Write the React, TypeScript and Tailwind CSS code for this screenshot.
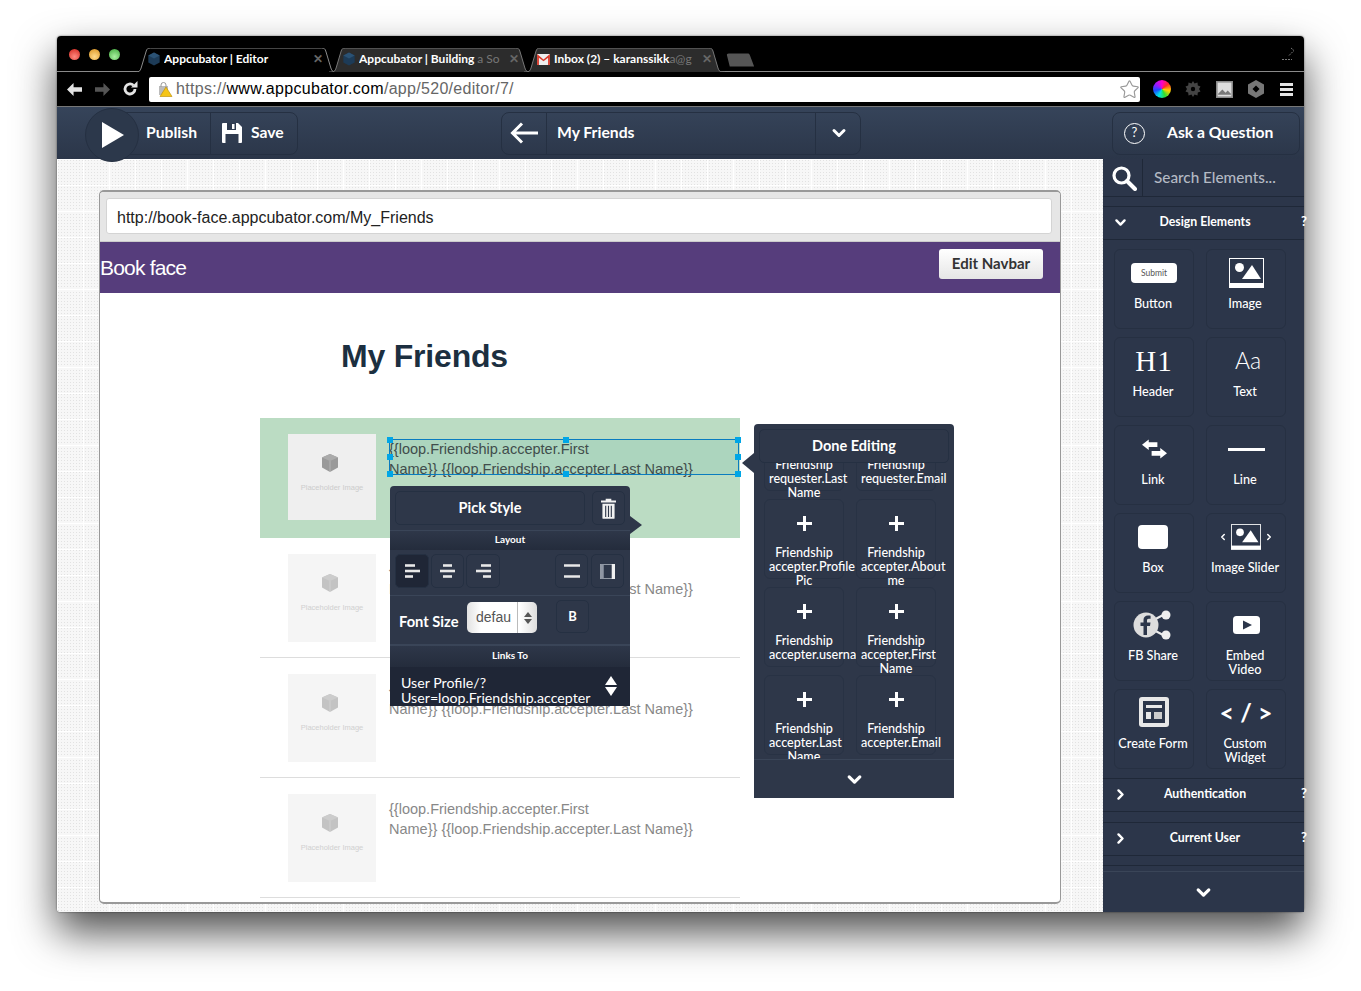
import { Star } from "lucide-react";

function Chevron({ dir = "down", className = "" }: { dir?: "down" | "right"; className?: string }) {
  return (
    <svg viewBox="0 0 16 16" className={className} fill="none" stroke="#fff" strokeWidth="3" strokeLinecap="round" strokeLinejoin="round">
      {dir === "down" ? <path d="M3 5.5l5 5 5-5" /> : <path d="M5.5 3l5 5-5 5" />}
    </svg>
  );
}

function Hex({ className = "" }: { className?: string }) {
  return (
    <svg viewBox="0 0 16 16" className={className}>
      <path d="M8 .5l6.5 3.5v8L8 15.5 1.5 12V4z" fill="#1d3b57" />
      <path d="M8 .5l6.5 3.5L8 7.5 1.5 4z" fill="#2b5274" />
    </svg>
  );
}

function TabShape({ fill, stroke, className = "" }: { fill: string; stroke: string; className?: string }) {
  return (
    <svg viewBox="0 0 200 24" preserveAspectRatio="none" className={className}>
      <path d="M0 24h2c3 0 4-1 5-4L12 3c.6-2 1.6-3 4-3h168c2.400 0 3.400 1 4 3l5 17c1 3 2 4 5 4h2" fill={fill} stroke={stroke} strokeWidth="1" vectorEffect="non-scaling-stroke" />
    </svg>
  );
}

function Tab({ title, fade, active, icon, width }: { title: string; fade?: string; active?: boolean; icon: React.ReactNode; width: string }) {
  return (
    <div className={`relative h-[24px] shrink-0 ${width}`}>
      <TabShape fill={active ? "#000" : "#2c2c2c"} stroke={active ? "#8a8a8a" : "#777"} className="absolute inset-0 w-full h-full" />
      <div className={`relative flex items-center h-full pl-[13px] pb-[2px] gap-[3px] text-[12px] font-bold text-white whitespace-nowrap ${active ? "pr-[15px]" : "pr-[13px]"}`}>
        <span className="w-[14px] h-[14px] shrink-0 flex items-center">{icon}</span>
        <span className="flex-1 overflow-hidden">
          {title}
          {fade && <span className="text-[#777] font-normal">{fade}</span>}
        </span>
        <span className="text-[#666] text-[12px] leading-none ml-1">✕</span>
      </div>
    </div>
  );
}

function ChromeBar() {
  return (
    <div className="h-[36px] bg-black flex items-end relative shrink-0 border-b border-[#8a8a8a] rounded-t-[4px]">
      <div className="flex items-center gap-[9px] absolute left-[12px] top-[13px]">
        <span className="w-[11px] h-[11px] rounded-full bg-[radial-gradient(circle_at_50%_70%,#ff8a80,#d3241c)]" />
        <span className="w-[11px] h-[11px] rounded-full bg-[radial-gradient(circle_at_50%_70%,#ffd98a,#d8901c)]" />
        <span className="w-[11px] h-[11px] rounded-full bg-[radial-gradient(circle_at_50%_70%,#a8f0a0,#3fa83a)]" />
      </div>
      <div className="flex ml-[77px] -mb-px relative">
        <Tab active title="Appcubator | Editor" width="w-[204px]" icon={<Hex className="w-[14px] h-[14px]" />} />
        <div className="-ml-[9px]">
          <Tab title="Appcubator | Building " fade="a So" width="w-[203px]" icon={<Hex className="w-[14px] h-[14px]" />} />
        </div>
        <div className="-ml-[8px]">
          <Tab
            title="Inbox (2) – karanssikk"
            fade="a@g"
            width="w-[201px]"
            icon={
              <svg viewBox="0 0 14 12" className="w-[13px] h-[11px]">
                <rect width="14" height="12" fill="#eee" />
                <path d="M0 0l7 6 7-6v12h-2V4L7 8 2 4v8H0z" fill="#d93a2b" />
              </svg>
            }
          />
        </div>
        <svg viewBox="0 0 32 14" className="w-[30px] h-[14px] ml-[1px] self-end mb-[5px]">
          <path d="M4 14L1 2c-.3-1 .3-2 2-2h20c1.500 0 2 .5 2.500 2L30 14z" fill="#555" />
        </svg>
      </div>
      <svg viewBox="0 0 16 16" className="absolute right-[8px] top-[9px] w-[16px] h-[16px]" stroke="#777" fill="none">
        <path d="M2 14.500h10M11 3l3 2.500-5 5" strokeDasharray="2 1" />
      </svg>
    </div>
  );
}

function AddressBar() {
  return (
    <div className="h-[35px] bg-black flex items-center shrink-0 border-b border-[#777]">
      <div className="w-[92px] flex items-center pl-[9px] shrink-0">
        <svg viewBox="0 0 18 16" className="w-[17px] h-[15px]">
          <path d="M8 1L1 8l7 7V10.500h9v-5H8z" fill="#e4e4e4" />
        </svg>
        <svg viewBox="0 0 18 16" className="w-[17px] h-[15px] ml-[11px]">
          <path d="M10 1l7 7-7 7V10.500H1v-5h9z" fill="#555" />
        </svg>
        <svg viewBox="0 0 16 16" className="w-[16px] h-[16px] ml-[11px]" fill="none">
          <path d="M13 8a5 5 0 1 1-1.600-3.700" stroke="#e4e4e4" strokeWidth="2.800" />
          <path d="M9 6.500h6.500V0z" fill="#e4e4e4" />
        </svg>
      </div>
      <div className="w-[991px] h-[25px] bg-white rounded-[2px] flex items-center pl-[8px] shrink-0">
        <svg viewBox="0 0 16 16" className="w-[16px] h-[16px] shrink-0">
          <rect x="2" y="5" width="9" height="9" fill="#bbb" />
          <path d="M4 6V4a2.500 2.500 0 0 1 5 0v2" stroke="#999" fill="none" />
          <path d="M9 6l6 9.500H3z" fill="#f5c518" stroke="#b88a00" strokeWidth=".6" />
        </svg>
        <span className="ml-[3px] text-[16px] text-[#666] [font-family:'Liberation_Sans',sans-serif] tracking-[0.3px] whitespace-nowrap">
          https://<span className="text-black">www.appcubator.com</span>/app/520/editor/7/
        </span>
        <Star className="ml-auto w-[21px] h-[21px] text-[#999]" strokeWidth={1.3} />
      </div>
      <div className="flex items-center flex-1 pl-[13px]">
        <span className="w-[18px] h-[18px] rounded-full bg-[conic-gradient(#ff00c8,#ff2a2a,#ffd400,#2fe02f,#00e5e5,#1a4dff,#9a18ff,#ff00c8)]" />
        <svg viewBox="0 0 16 16" className="w-[16px] h-[16px] ml-[14px]" fill="#444">
          <path d="M8 0l1.500 2.500L12.500 1.500 12.800 4.500 15.500 5.500 14 8l1.500 2.500-2.700 1-.3 3-3-1L8 16l-1.500-2.500-3 1-.3-3-2.700-1L2 8 .5 5.500l2.700-1 .3-3 3 1z" />
          <circle cx="8" cy="8" r="2.200" fill="#000" />
        </svg>
        <svg viewBox="0 0 16 16" className="w-[17px] h-[17px] ml-[15px]">
          <rect width="16" height="16" fill="#8a8a8a" />
          <rect x="1.500" y="1.500" width="13" height="13" fill="#ddd" />
          <path d="M2 12l4-4 3 3 2-2 3 3v1H2z" fill="#777" />
        </svg>
        <svg viewBox="0 0 16 18" className="w-[16px] h-[18px] ml-[15px]">
          <path d="M8 0l8 4.500v9L8 18l-8-4.500v-9z" fill="#777" />
          <path d="M8 5.500L11.500 9 8 12.500 4.500 9z" fill="#000" />
        </svg>
        <div className="ml-[16px] flex flex-col gap-[2px] w-[13px]">
          <span className="h-[3px] bg-[#e4e4e4]" />
          <span className="h-[3px] bg-[#e4e4e4]" />
          <span className="h-[3px] bg-[#e4e4e4]" />
        </div>
      </div>
    </div>
  );
}

const groupCls = "h-[43px] border border-[#253042] rounded-[8px] flex items-stretch text-white text-[15.7px] font-bold";

function Toolbar() {
  return (
    <div className="h-[52px] shrink-0 bg-[linear-gradient(#36445a,#2b3649)] relative flex items-center pt-px text-white">
      <div className={`${groupCls} ml-[43px] w-[198px] pl-[45px]`}>
        <div className="w-[65px] flex items-center pb-[1px] border-r border-[#253042]">Publish</div>
        <div className="flex items-center pl-[11px] gap-[9px] pb-[1px]">
          <svg viewBox="0 0 20 20" className="w-[20px] h-[20px]">
            <path d="M1 0h15l4 4v15a1 1 0 0 1-1 1H1a1 1 0 0 1-1-1V1a1 1 0 0 1 1-1z" fill="#fff" />
            <rect x="5" y="0" width="9" height="7" fill="#2f3b4f" />
            <rect x="10" y="1" width="2.500" height="5" fill="#fff" />
            <rect x="3.500" y="11" width="13" height="9" fill="#2f3b4f" />
          </svg>
          Save
        </div>
      </div>
      {/* play button sits on top of the publish group */}
      <div className="absolute left-[28px] top-[1px] w-[54px] h-[54px] rounded-full bg-[#2c384b] border border-[#253042] flex items-center justify-center z-10">
        <svg viewBox="0 0 22 26" className="w-[22px] h-[26px] ml-[2px]">
          <path d="M0 0l22 13L0 26z" fill="#fff" />
        </svg>
      </div>
      <div className={`${groupCls} ml-[203px] w-[360px]`}>
        <div className="w-[45px] flex items-center justify-center border-r border-[#253042] pb-[1px]">
          <svg viewBox="0 0 28 22" className="w-[28px] h-[22px]" fill="none" stroke="#fff" strokeWidth="3">
            <path d="M28 11H3M12 1.500L2.500 11l9.500 9.500" />
          </svg>
        </div>
        <div className="flex-1 flex items-center pl-[10px] pb-[1px] border-r border-[#253042]">My Friends</div>
        <div className="w-[44px] flex items-center justify-center pb-[1px] pl-[1px]">
          <Chevron className="w-[16px] h-[16px]" />
        </div>
      </div>
      <div className={`${groupCls} ml-[251px] w-[188px] items-center pb-[1px]`}>
        <span className="ml-[11px] w-[21px] h-[21px] rounded-full border-[1.5px] border-white flex items-center justify-center text-[13px] font-normal self-center">?</span>
        <span className="ml-[22px] self-center">Ask a Question</span>
      </div>
    </div>
  );
}

function PlaceholderImg({ active }: { active?: boolean }) {
  return (
    <div className={`w-[88px] flex flex-col items-center ${active ? "h-[86px] bg-[#efefef]" : "h-[88px] bg-[#f4f4f4] opacity-90"}`}>
      <svg viewBox="0 0 18 18" className={`w-[18px] h-[18px] mt-[20px] ml-[-4px] ${active ? "" : "opacity-60"}`}>
        <path d="M9 0l8 3.500v10L9 18l-8-4.500v-10z" fill="#999" />
        <path d="M1 3.500L9 7l8-3.500L9 0z" fill="#aaa" />
        <path d="M9 7v11" stroke="#ccc" strokeWidth=".5" />
      </svg>
      <span className="mt-[11px] text-[7.5px] leading-[10px] text-[#ccc] whitespace-nowrap">Placeholder Image</span>
    </div>
  );
}

function Row({ active }: { active?: boolean }) {
  return (
    <div className={`h-[120px] flex pt-[16px] pl-[28px] shrink-0 ${active ? "bg-[#bbdcc3] text-[#444]" : "border-b border-[#ddd] text-[#888]"}`}>
      <PlaceholderImg active={active} />
      <p className="ml-[13px] mt-[5px] text-[14.5px] leading-[20px] whitespace-nowrap">
        {"{{loop.Friendship.accepter.First"}
        <br />
        {"Name}} {{loop.Friendship.accepter.Last Name}}"}
      </p>
    </div>
  );
}

function Handle({ className }: { className: string }) {
  return <span className={`absolute w-[6px] h-[6px] bg-[#00a6e6] ${className}`} />;
}

function darkBtn(extra: string) {
  return `border border-[#253042] rounded-[5px] flex items-center justify-center ${extra}`;
}

function AlignIcon({ mode }: { mode: "left" | "center" | "right" }) {
  const lines =
    mode === "left"
      ? ["M0 1.500h10", "M0 7h15", "M0 12.500h8"]
      : mode === "center"
        ? ["M3 1.500h9", "M0 7h15", "M3 12.500h9"]
        : ["M5 1.500h10", "M0 7h15", "M7 12.500h8"];
  return (
    <svg viewBox="0 0 15 14" className="w-[15px] h-[14px]" stroke="#e8e8e8" strokeWidth="2.600">
      {lines.map((d) => (
        <path key={d} d={d} />
      ))}
    </svg>
  );
}

function StylePopup() {
  return (
    <div className="absolute left-[390px] top-[486px] w-[240px] h-[220px] bg-[#2e3749] rounded-t-[4px] text-white z-20 flex flex-col">
      <span className="absolute -right-[12px] top-[30px] w-0 h-0 border-y-[9px] border-y-transparent border-l-[12px] border-l-[#2e3749]" />
      <div className="h-[44px] flex pt-[5px] pl-[5px] shrink-0">
        <div className={darkBtn("w-[190px] h-[34px] text-[14.5px] font-bold pb-[1px]")}>Pick Style</div>
        <div className={darkBtn("w-[33px] h-[34px] ml-[7px]")}>
          <svg viewBox="0 0 16 22" className="w-[15px] h-[21px]">
            <path d="M5 1.500h6M0 3.500h16" stroke="#f2f2f2" strokeWidth="2" />
            <path d="M1.500 6h13v15a1 1 0 0 1-1 1h-11a1 1 0 0 1-1-1z" fill="#f2f2f2" />
            <path d="M5 8v12M8 8v12M11 8v12" stroke="#2e3749" strokeWidth="1.200" />
          </svg>
        </div>
      </div>
      <div className="h-[20px] shrink-0 border-t border-[#3a4558] bg-[linear-gradient(#2e3749,#242c3c)] flex items-center justify-center text-[10px] font-bold pb-[2px]">Layout</div>
      <div className="h-[46px] shrink-0 border-b border-[#3a4558] flex items-start pt-[4px] pl-[5px] relative">
        <div className={darkBtn("w-[34px] h-[34px] bg-[#1f2636]")}>
          <AlignIcon mode="left" />
        </div>
        <div className={darkBtn("w-[33px] h-[34px] ml-[2px]")}>
          <AlignIcon mode="center" />
        </div>
        <div className={darkBtn("w-[34px] h-[34px] ml-[2px]")}>
          <AlignIcon mode="right" />
        </div>
        <div className={darkBtn("w-[33px] h-[34px] ml-[55px]")}>
          <svg viewBox="0 0 16 14" className="w-[16px] h-[14px]" stroke="#e8e8e8" strokeWidth="2.600">
            <path d="M0 1.500h16M0 12.500h16" />
          </svg>
        </div>
        <div className={darkBtn("w-[33px] h-[34px] ml-[3px]")}>
          <svg viewBox="0 0 16 16" className="w-[15px] h-[15px]" fill="none">
            <rect x=".5" y=".5" width="15" height="15" stroke="#9aa0ab" />
            <rect x="1" y="0" width="3" height="16" fill="#8f96a3" />
            <rect x="12.500" y="0" width="3.500" height="16" fill="#f0f0f0" />
          </svg>
        </div>
      </div>
      <div className="h-[48px] shrink-0 flex items-start relative">
        <span className="ml-[9px] mt-[15px] text-[14.7px] font-bold leading-[20px] whitespace-nowrap">Font Size</span>
        <div className="absolute left-[77px] top-[6px] w-[70px] h-[31px] rounded-[5px] bg-[linear-gradient(90deg,#e2e2e2,#fff_20%,#fff_75%,#ddd)] flex items-center text-[#555] text-[14px] [font-family:'Liberation_Sans',sans-serif]">
          <span className="pl-[9px] w-[50px] overflow-hidden">defau</span>
          <span className="flex-1 h-full border-l border-[#bbb] flex flex-col items-center justify-center gap-[2px]">
            <span className="w-0 h-0 border-x-[4px] border-x-transparent border-b-[5px] border-b-[#555]" />
            <span className="w-0 h-0 border-x-[4px] border-x-transparent border-t-[5px] border-t-[#555]" />
          </span>
        </div>
        <div className={darkBtn("absolute left-[166px] top-[4px] w-[33px] h-[33px] text-[13px] font-bold")}>B</div>
      </div>
      <div className="h-[23px] shrink-0 border-t-2 border-[#3a4558] bg-[linear-gradient(#2e3749,#242c3c)] flex items-center justify-center text-[10px] font-bold pb-[2px]">Links To</div>
      <div className="flex-1 bg-[#1f2636] relative pl-[11px] pt-[9px] text-[14.2px] leading-[14.500px]">
        User Profile/?
        <br />
        User=loop.Friendship.accepter
        <span className="absolute right-[13px] top-[9px] flex flex-col gap-[2px]">
          <span className="w-0 h-0 border-x-[6px] border-x-transparent border-b-[9px] border-b-white" />
          <span className="w-0 h-0 border-x-[6px] border-x-transparent border-t-[9px] border-t-white" />
        </span>
      </div>
    </div>
  );
}

const attrs = [
  "Friendship requester.Last Name",
  "Friendship requester.Email",
  "Friendship accepter.Profile Pic",
  "Friendship accepter.About me",
  "Friendship accepter.userna",
  "Friendship accepter.First Name",
  "Friendship accepter.Last Name",
  "Friendship accepter.Email",
];

function DataPopup() {
  return (
    <div className="absolute left-[754px] top-[424px] w-[200px] h-[374px] bg-[#2e3749] rounded-t-[4px] text-white z-20 flex flex-col">
      <span className="absolute -left-[12px] top-[29px] w-0 h-0 border-y-[10px] border-y-transparent border-r-[12px] border-r-[#2e3749]" />
      <div className="px-[5px] pt-[5px] shrink-0 relative z-10">
        <div className={darkBtn("h-[34px] text-[14.5px] font-bold bg-[#2e3749] pb-[1px]")}>Done Editing</div>
      </div>
      <div className="flex-1 overflow-hidden pl-[10px]">
        <div className="grid grid-cols-[80px_80px] gap-x-[12px] gap-y-[8px] -mt-[52px]">
          {attrs.map((a) => (
            <div key={a} className="h-[80px] border border-[#283244] rounded-[6px] flex flex-col items-center">
              <svg viewBox="0 0 16 16" className="w-[15px] h-[15px] mt-[16px] shrink-0" stroke="#fff" strokeWidth="3.200">
                <path d="M8 0v16M0 8h16" />
              </svg>
              <p className="mt-[15px] w-[70px] text-center text-[12.6px] leading-[14px] font-medium">{a}</p>
            </div>
          ))}
        </div>
      </div>
      <div className="h-[39px] shrink-0 border-t border-[#3a4558] bg-[#2e3749] flex items-center justify-center relative z-10">
        <Chevron className="w-[17px] h-[17px]" />
      </div>
    </div>
  );
}

function EditorFrame() {
  return (
    <div className="w-[962px] h-[714px] border-2 border-x border-[#999] rounded-[5px] overflow-hidden bg-white flex flex-col shrink-0">
      <div className="h-[50px] bg-[#e6e6e6] border-b border-[#ccc] pt-[6px] pl-[6px] pr-[8px] shrink-0">
        <div className="h-[36px] bg-white border border-[#d4d4d4] rounded-[3px] flex items-center pl-[10px] pt-[3px] text-[16px] text-[#222] [font-family:'Liberation_Sans',sans-serif]">
          http://book-face.appcubator.com/My_Friends
        </div>
      </div>
      <div className="h-[51px] bg-[#563d7c] shrink-0 flex items-start justify-between pr-[17px]">
        <span className="text-white text-[21px] tracking-[-0.8px] leading-[51px] [font-family:'Liberation_Sans',sans-serif]">Book face</span>
        <div className="w-[104px] h-[30px] mt-[7px] pb-[1px] rounded-[3px] bg-[linear-gradient(#fff,#e6e6e6)] flex items-center justify-center text-[15px] font-bold text-[#333]">Edit Navbar</div>
      </div>
      <div className="pl-[160px] flex flex-col [font-family:'Liberation_Sans',sans-serif] overflow-hidden flex-1">
        <h1 className="ml-[81px] mt-[45px] mb-[44px] h-[36px] text-[32px] leading-[36px] font-bold text-[#1c2f40] tracking-[-0.2px]">My Friends</h1>
        <div className="w-[480px] flex flex-col">
          <Row active />
          <Row />
          <Row />
          <Row />
        </div>
      </div>
    </div>
  );
}

function SideHeader({ title, open }: { title: string; open?: boolean }) {
  return (
    <div className="h-[34px] border-y border-[#1f2838] bg-[#2c364a] flex items-center relative text-[12.3px] font-bold justify-center pl-[3px] pb-[2px] shrink-0">
      <Chevron dir={open ? "down" : "right"} className="absolute left-[11px] top-[9px] w-[13px] h-[13px]" />
      {title}
      <span className="absolute -right-[3px] text-[13px]">?</span>
    </div>
  );
}

function Tile({ label, children }: { label: string; children: React.ReactNode }) {
  return (
    <div className="w-[80px] h-[80px] border border-[#263042] rounded-[6px] flex flex-col items-center">
      <div className="h-[46px] w-full flex items-center justify-center shrink-0">{children}</div>
      <p className="w-[70px] mr-[2px] text-center text-[12.7px] leading-[14px] font-medium">{label}</p>
    </div>
  );
}

function ImageGlyph({ small }: { small?: boolean }) {
  return (
    <svg viewBox="0 0 35 30" className={small ? "w-[30px] h-[26px]" : "w-[35px] h-[30px]"}>
      <path d="M0 0h35v30H0z" fill="#fff" />
      <rect x="1" y="1" width="33" height="24" fill="#2c364a" />
      <circle cx="10.500" cy="9.500" r="4.500" fill="#fff" />
      <path d="M13 21l10-14 9 14z" fill="#fff" />
    </svg>
  );
}

function Sidebar() {
  return (
    <div className="w-[201px] bg-[#2c364a] text-white flex flex-col shrink-0 relative">
      <div className="h-[38px] border-b border-[#1f2838] flex items-stretch shrink-0">
        <div className="w-[40px] border-r border-[#1f2838] flex items-center justify-center">
          <svg viewBox="0 0 26 26" className="w-[26px] h-[26px] ml-[2px]" fill="none" stroke="#fff">
            <circle cx="10.500" cy="10.500" r="7.500" strokeWidth="3.200" />
            <path d="M16 16l8 8" strokeWidth="4" strokeLinecap="round" />
          </svg>
        </div>
        <div className="flex items-center pl-[11px] text-[15.3px] font-medium text-[#b4bac4]">Search Elements...</div>
      </div>
      <div className="h-[9px] shrink-0" />
      <SideHeader title="Design Elements" open />
      <div className="grid grid-cols-[80px_80px] gap-x-[12px] gap-y-[8px] pl-[11px] pt-[9px] pb-[9px] shrink-0">
        <Tile label="Button">
          <div className="w-[46px] h-[20px] bg-white rounded-[4px] text-[8.500px] text-[#555] flex items-center justify-center">Submit</div>
        </Tile>
        <Tile label="Image">
          <ImageGlyph />
        </Tile>
        <Tile label="Header">
          <span className="text-[29px] [font-family:'Liberation_Serif',serif] tracking-[1px] leading-none">H1</span>
        </Tile>
        <Tile label="Text">
          <span className="text-[23px] font-light leading-none ml-[4px] -mt-[2px]">Aa</span>
        </Tile>
        <Tile label="Link">
          <svg viewBox="0 0 26 20" className="w-[25px] h-[20px]" fill="#fff">
            <path d="M0 5.500L7 0v3h9v5H7v3z" />
            <path d="M26 14.500L19 9v3h-9v5h9v3z" />
          </svg>
        </Tile>
        <Tile label="Line">
          <span className="w-[37px] h-[3px] bg-white" />
        </Tile>
        <Tile label="Box">
          <span className="w-[30px] h-[24px] bg-white rounded-[4px] mr-[2px]" />
        </Tile>
        <Tile label="Image Slider">
          <div className="flex items-center gap-[4px]">
            <Chevron dir="right" className="w-[8px] h-[8px] rotate-180" />
            <ImageGlyph small />
            <Chevron dir="right" className="w-[8px] h-[8px]" />
          </div>
        </Tile>
        <Tile label="FB Share">
          <svg viewBox="0 0 40 30" className="w-[40px] h-[30px] mr-[2px]">
            <path d="M15 13L32 4M15 17l17 9" stroke="#eee" strokeWidth="2" />
            <circle cx="33" cy="5" r="4.500" fill="#eee" />
            <circle cx="33" cy="25" r="4.500" fill="#eee" />
            <circle cx="13" cy="15" r="12.500" fill="#ddd" />
            <path d="M14 25v-9h3l.5-3.500H14V10.500c0-1 .4-1.700 1.800-1.700h1.800V5.700c-.5 0-1.500-.2-2.600-.2-2.700 0-4.500 1.600-4.500 4.500v2.500h-3V16h3v9z" fill="#2c364a" />
          </svg>
        </Tile>
        <Tile label="Embed Video">
          <svg viewBox="0 0 27 18" className="w-[27px] h-[18px]">
            <rect width="27" height="18" rx="3.500" fill="#fff" />
            <path d="M10 4.500l9 4.500-9 4.500z" fill="#2c364a" />
          </svg>
        </Tile>
        <Tile label="Create Form">
          <svg viewBox="0 0 30 30" className="w-[30px] h-[30px] -mt-[2px]">
            <rect width="30" height="30" rx="3" fill="#e8e8e8" />
            <rect x="4" y="4" width="22" height="22" fill="#2c364a" />
            <rect x="7" y="8" width="16" height="3" fill="#e8e8e8" />
            <rect x="7" y="15" width="5" height="7" fill="#e8e8e8" />
            <rect x="15" y="15" width="8" height="7" fill="#ccc" />
          </svg>
        </Tile>
        <Tile label="Custom Widget">
          <span className="text-[25px] font-bold leading-none whitespace-nowrap tracking-[0px] -mt-[2px]">&lt; / &gt;</span>
        </Tile>
      </div>
      <SideHeader title="Authentication" />
      <div className="h-[10px] shrink-0" />
      <SideHeader title="Current User" />
      <div className="h-[9px] shrink-0" />
      <div className="h-[7px] border-t border-[#1f2838] border-b border-b-[#3a4558] shrink-0" />
      <div className="flex-1 flex items-center justify-center">
        <Chevron className="w-[17px] h-[17px]" />
      </div>
    </div>
  );
}

export default function App() {
  return (
    <div className="w-[1361px] h-[991px] bg-white overflow-hidden pt-[36px] pl-[57px] [font-family:Lato,sans-serif]">
      <div className="relative w-[1247px] h-[876px] flex flex-col rounded-[4px] shadow-[0_20px_42px_rgba(0,0,0,0.7),0_0_2px_rgba(0,0,0,0.6)] overflow-visible">
        <ChromeBar />
        <AddressBar />
        <Toolbar />
        <div className="flex flex-1 min-h-0">
          <div className="flex-1 bg-[#f7f7f7] [background-image:linear-gradient(#fff_1px,transparent_1px),linear-gradient(90deg,#fff_1px,transparent_1px),radial-gradient(#e2e2e2_0.6px,transparent_0.8px)] [background-size:26px_26px,26px_26px,3px_3px] pt-[31px] pl-[42px] rounded-bl-[3px]">
            <EditorFrame />
          </div>
          <Sidebar />
        </div>
        {/* floating editor popups, coordinates are relative to the window */}
        <div className="absolute -left-[57px] -top-[36px] w-0 h-0">
          <StylePopup />
          <DataPopup />
          {/* selection box around the text being edited */}
          <div className="absolute left-[389px] top-[439px] w-[350px] h-[36px] border border-[#0a7cbf] bg-[#2a9d8f]/10 z-10">
            <Handle className="-left-[3px] -top-[3px]" />
            <Handle className="left-[173px] -top-[3px]" />
            <Handle className="-right-[3px] -top-[3px]" />
            <Handle className="-left-[3px] top-[14px]" />
            <Handle className="-right-[3px] top-[14px]" />
            <Handle className="-left-[3px] -bottom-[3px]" />
            <Handle className="left-[173px] -bottom-[3px]" />
            <Handle className="-right-[3px] -bottom-[3px]" />
          </div>
        </div>
      </div>
    </div>
  );
}
